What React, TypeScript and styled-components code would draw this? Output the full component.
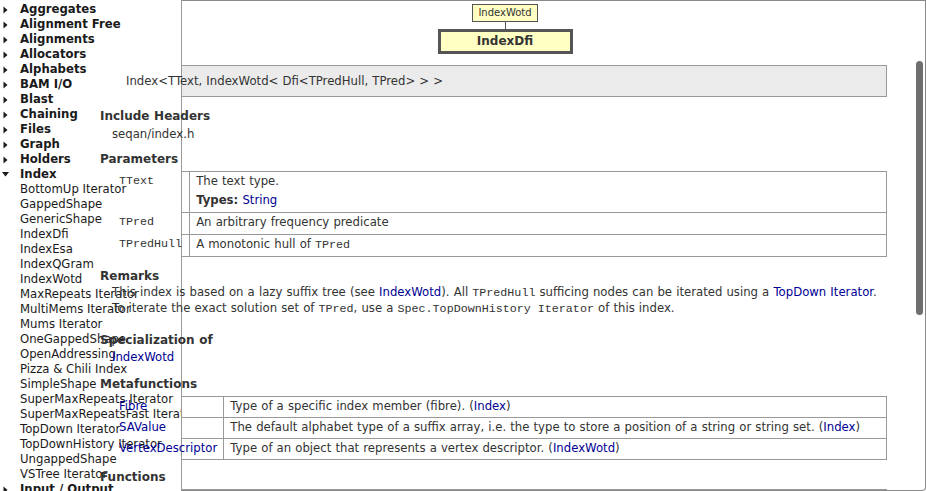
import React from "react";
import styled, { createGlobalStyle } from "styled-components";

const GlobalStyle = createGlobalStyle`
  html, body { margin: 0; padding: 0; background: #fff; overflow: hidden; }
  body { font-family: "DejaVu Sans", Verdana, sans-serif; }
`;

const Page = styled.div`
  position: relative;
  width: 926px;
  height: 491px;
  overflow: hidden;
  font-family: "DejaVu Sans", Verdana, sans-serif;
  font-size: 11.7px;
  color: #333;
`;

/* ---------- sidebar ---------- */
const Sidebar = styled.nav`
  float: left;
  width: 181px;
  height: 491px;
  margin-right: -182px;
  border-right: 1px solid #999;
  background: #fff;
  overflow: hidden;
`;

const NavList = styled.ul`
  list-style: none;
  margin: 0;
  padding: 2px 0 0;
`;

const NavItem = styled.li<{ $group?: boolean }>`
  display: flex;
  align-items: center;
  height: 15px;
  line-height: 15px;
  white-space: nowrap;
  font-weight: ${(p) => (p.$group ? 700 : 400)};
  color: #1a1a1a;
`;

const Toggle = styled.span`
  flex: none;
  width: 20px;
  height: 15px;
  display: flex;
  align-items: center;
  padding-left: 2px;
  box-sizing: border-box;
`;

const Arrow = ({ open }: { open?: boolean }) =>
  open ? (
    <svg width="8" height="5" viewBox="0 0 8 5">
      <polygon points="0,0 7,0 3.5,4.5" fill="#1a1a1a" />
    </svg>
  ) : (
    <svg width="8" height="8" viewBox="0 0 8 8">
      <polygon points="1.5,0.5 5.5,4 1.5,7.5" fill="#1a1a1a" />
    </svg>
  );

/* ---------- main frame ---------- */
const Main = styled.main`
  height: 491px;
  box-sizing: border-box;
  border: 1px solid #8a8a8a;
  border-left: none;
  border-bottom-right-radius: 4px;
  overflow: hidden;
  padding: 0 38px 0 100px;
  word-spacing: 0.4px;
`;

const Diagram = styled.div`
  display: flex;
  flex-direction: column;
  align-items: center;
  padding: 3px 0 0 23px;
  word-spacing: 0;
`;

const ParentNode = styled.div`
  box-sizing: border-box;
  height: 18px;
  padding: 0 5px;
  line-height: 16px;
  font-size: 10px;
  background: #ffffc4;
  border: 1px solid #555;
  color: #333;
`;

const Connector = styled.div`
  width: 1px;
  height: 7px;
  background: #555;
`;

const ChildNode = styled.div`
  box-sizing: border-box;
  width: 135px;
  height: 25px;
  line-height: 19px;
  text-align: center;
  font-size: 12px;
  font-weight: 700;
  background: #ffffc4;
  border: 3px solid #555;
  color: #333;
`;

const Signature = styled.div`
  margin-top: 11px;
  height: 32px;
  box-sizing: border-box;
  border: 1px solid #999;
  background: #ebebeb;
  padding-left: 25px;
  line-height: 30px;
  white-space: nowrap;
`;

const Heading = styled.h3<{ $mt: number }>`
  margin: ${(p) => p.$mt}px 0 0;
  font-size: 12px;
  font-weight: 700;
  line-height: 16px;
  color: #333;
`;

const Text = styled.div<{ $mt?: number }>`
  margin-top: ${(p) => p.$mt ?? 0}px;
  padding-left: 12px;
  line-height: 16px;
  white-space: nowrap;
`;

const Code = styled.code`
  font-family: "Liberation Mono", "Courier New", monospace;
  font-size: 11.7px;
  line-height: 0;
  word-spacing: 0;
`;

const Link = styled.a`
  color: #000094;
  text-decoration: none;
`;

const DefTable = styled.table`
  border-collapse: collapse;
  margin: 4px 0 0 12px;
  width: calc(100% - 12px);
  font-size: 11.7px;
  color: #333;
  line-height: 16px;
`;

const KeyCell = styled.td<{ $mono?: boolean }>`
  border: 1px solid #999;
  vertical-align: top;
  white-space: nowrap;
  width: 1px;
  padding: ${(p) => (p.$mono ? "1px 7px 4px 6px" : "1px 6px 3px 6px")};
  font-family: ${(p) =>
    p.$mono
      ? `"Liberation Mono", "Courier New", monospace`
      : `"DejaVu Sans", Verdana, sans-serif`};
`;

const DescCell = styled.td<{ $tight?: boolean }>`
  border: 1px solid #999;
  vertical-align: top;
  white-space: nowrap;
  padding: ${(p) => (p.$tight ? "1px 6px 3px" : "1px 6px 4px")};
`;

const SubLine = styled.div`
  margin-top: 3px;
`;

const Scrollbar = styled.div`
  position: absolute;
  left: 916px;
  top: 61px;
  width: 7px;
  height: 254px;
  border-radius: 4px;
  background: #6f6f6f;
`;

const groupsBefore = [
  "Aggregates",
  "Alignment Free",
  "Alignments",
  "Allocators",
  "Alphabets",
  "BAM I/O",
  "Blast",
  "Chaining",
  "Files",
  "Graph",
  "Holders",
];

const indexChildren = [
  "BottomUp Iterator",
  "GappedShape",
  "GenericShape",
  "IndexDfi",
  "IndexEsa",
  "IndexQGram",
  "IndexWotd",
  "MaxRepeats Iterator",
  "MultiMems Iterator",
  "Mums Iterator",
  "OneGappedShape",
  "OpenAddressing",
  "Pizza & Chili Index",
  "SimpleShape",
  "SuperMaxRepeats Iterator",
  "SuperMaxRepeatsFast Iterator",
  "TopDown Iterator",
  "TopDownHistory Iterator",
  "UngappedShape",
  "VSTree Iterator",
];

const groupsAfter = ["Input / Output", "Modifier", "Motif Search"];

const params = [
  { name: "TText", desc: "The text type.", types: "String" },
  { name: "TPred", desc: "An arbitrary frequency predicate" },
  { name: "TPredHull", desc: "A monotonic hull of ", code: "TPred" },
];

const metas = [
  { name: "Fibre", desc: "Type of a specific index member (fibre). ", ref: "Index" },
  {
    name: "SAValue",
    desc: "The default alphabet type of a suffix array, i.e. the type to store a position of a string or string set. ",
    ref: "Index",
  },
  {
    name: "VertexDescriptor",
    desc: "Type of an object that represents a vertex descriptor. ",
    ref: "IndexWotd",
  },
];

const functions = [
  { name: "indexRequire", desc: "On-demand creation of a specific index fibre. (Index)" },
  { name: "indexSupplied", desc: "Returns whether a specific index fibre is present. (Index)" },
];

export default function App() {
  return (
    <Page>
      <GlobalStyle />
      <Sidebar>
        <NavList>
          {groupsBefore.map((g) => (
            <NavItem key={g} $group>
              <Toggle>
                <Arrow />
              </Toggle>
              {g}
            </NavItem>
          ))}
          <NavItem $group>
            <Toggle>
              <Arrow open />
            </Toggle>
            Index
          </NavItem>
          {indexChildren.map((c) => (
            <NavItem key={c}>
              <Toggle />
              {c}
            </NavItem>
          ))}
          {groupsAfter.map((g) => (
            <NavItem key={g} $group>
              <Toggle>
                <Arrow />
              </Toggle>
              {g}
            </NavItem>
          ))}
        </NavList>
      </Sidebar>

      <Main>
        <Diagram>
          <ParentNode>IndexWotd</ParentNode>
          <Connector />
          <ChildNode>IndexDfi</ChildNode>
        </Diagram>

        <Signature>Index&lt;TText, IndexWotd&lt; Dfi&lt;TPredHull, TPred&gt; &gt; &gt;</Signature>

        <Heading $mt={11}>Include Headers</Heading>
        <Text $mt={2}>seqan/index.h</Text>

        <Heading $mt={9}>Parameters</Heading>
        <DefTable>
          <tbody>
            {params.map((p) => (
              <tr key={p.name}>
                <KeyCell $mono>{p.name}</KeyCell>
                <DescCell>
                  {p.desc}
                  {p.code && <Code>{p.code}</Code>}
                  {p.types && (
                    <SubLine>
                      <b>Types:</b> <Link href="#">{p.types}</Link>
                    </SubLine>
                  )}
                </DescCell>
              </tr>
            ))}
          </tbody>
        </DefTable>

        <Heading $mt={11}>Remarks</Heading>
        <Text>
          This index is based on a lazy suffix tree (see <Link href="#">IndexWotd</Link>). All{" "}
          <Code>TPredHull</Code> sufficing nodes can be iterated using a{" "}
          <Link href="#">TopDown Iterator</Link>.
          <br />
          To iterate the exact solution set of <Code>TPred</Code>, use a{" "}
          <Code>Spec.TopDownHistory Iterator</Code> of this index.
        </Text>

        <Heading $mt={16}>Specialization of</Heading>
        <Text $mt={1}>
          <Link href="#">IndexWotd</Link>
        </Text>

        <Heading $mt={11}>Metafunctions</Heading>
        <DefTable>
          <tbody>
            {metas.map((m) => (
              <tr key={m.name}>
                <KeyCell>
                  <Link href="#">{m.name}</Link>
                </KeyCell>
                <DescCell $tight>
                  {m.desc}(<Link href="#">{m.ref}</Link>)
                </DescCell>
              </tr>
            ))}
          </tbody>
        </DefTable>

        <Heading $mt={9}>Functions</Heading>
        <DefTable>
          <tbody>
            {functions.map((f) => (
              <tr key={f.name}>
                <KeyCell>
                  <Link href="#">{f.name}</Link>
                </KeyCell>
                <DescCell $tight>{f.desc}</DescCell>
              </tr>
            ))}
          </tbody>
        </DefTable>
      </Main>
      <Scrollbar />
    </Page>
  );
}
